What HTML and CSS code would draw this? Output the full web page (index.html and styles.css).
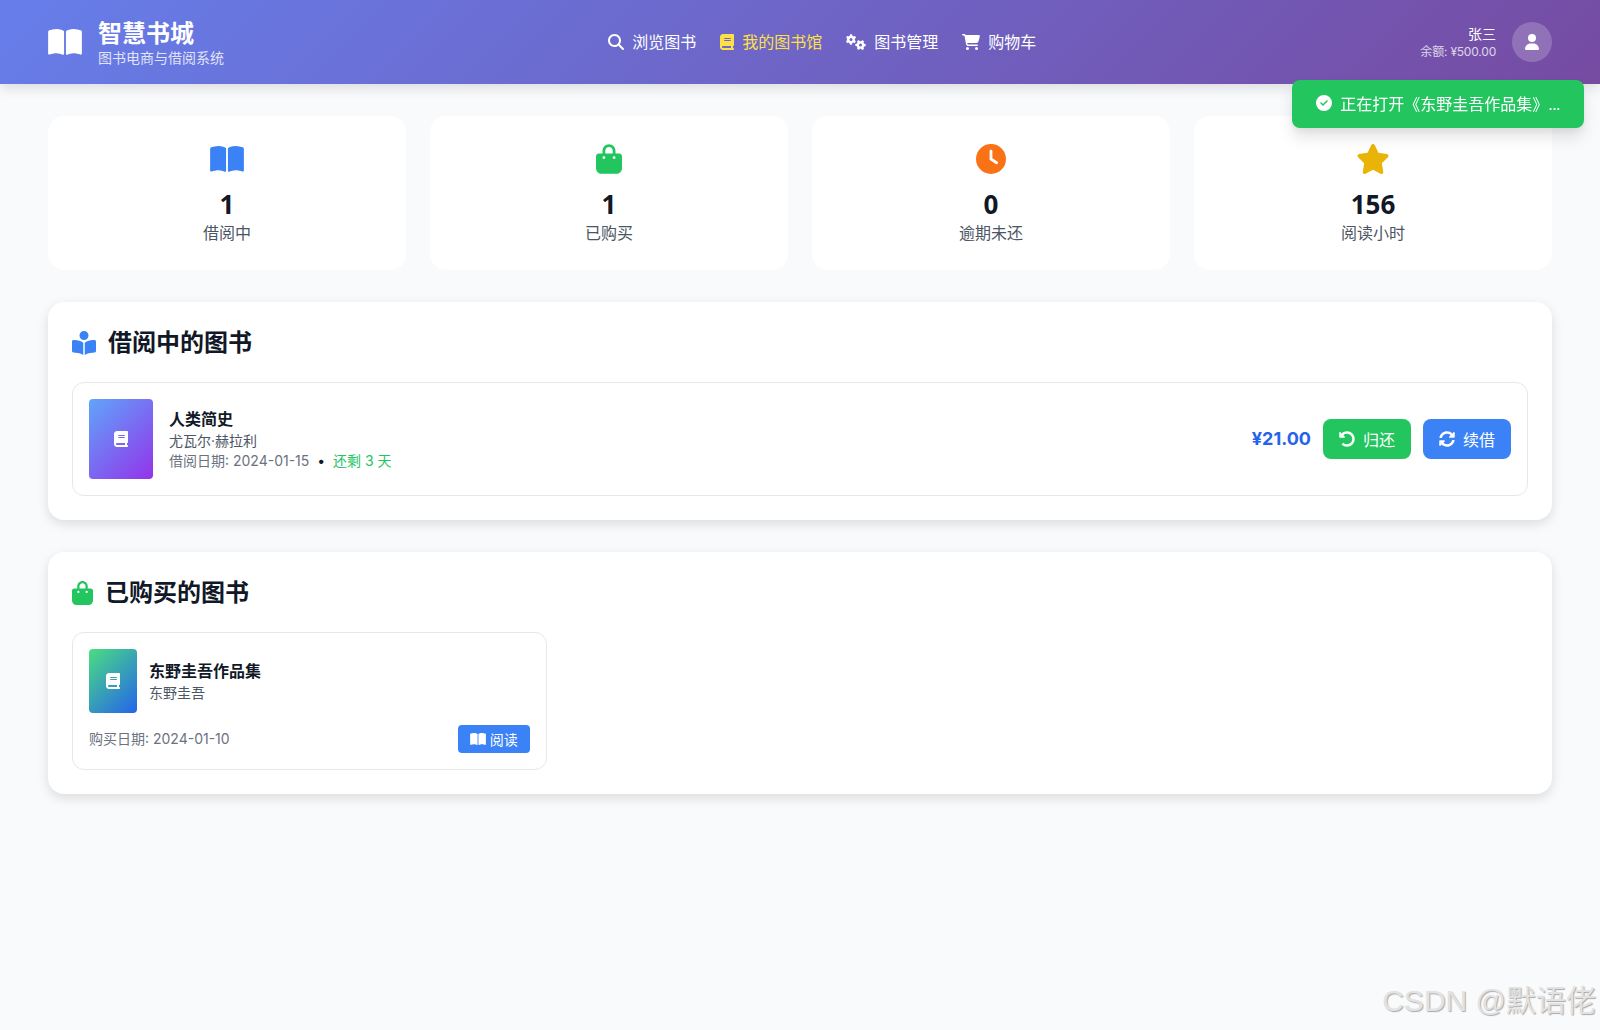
FILE: index.html
```html
<!DOCTYPE html>
<html lang="zh-CN">
<head>
  <meta charset="UTF-8">
  <title>我的图书馆 - 智慧书城</title>
  <link rel="stylesheet" href="styles.css">
</head>
<body>
  <svg class="icon-defs" xmlns="http://www.w3.org/2000/svg">
    <symbol id="i-book-open" viewBox="0 0 576 512"><path d="M249.6 471.5c10.8 3.8 22.4-4.1 22.4-15.5V78.6c0-4.2-1.6-8.4-5-11C247.4 52 202.4 32 144 32C93.5 32 46.3 45.3 18.1 56.1C6.8 60.5 0 71.7 0 83.8V454.1c0 11.9 12.8 20.2 24.1 16.5C55.6 460.1 105.5 448 144 448c33.9 0 79 14 105.6 23.5zm76.8 0C353 462 398.1 448 432 448c38.5 0 88.4 12.1 119.9 22.6c11.3 3.8 24.1-4.6 24.1-16.5V83.8c0-12.1-6.8-23.3-18.1-27.6C529.7 45.3 482.5 32 432 32c-58.4 0-103.4 20-123 35.6c-3.3 2.6-5 6.8-5 11V456c0 11.4 11.7 19.3 22.4 15.5z"/></symbol>
    <symbol id="i-bag" viewBox="0 0 448 512"><path d="M160 112c0-35.3 28.7-64 64-64s64 28.7 64 64v48H160V112zm-48 48H48c-26.5 0-48 21.5-48 48V416c0 53 43 96 96 96H352c53 0 96-43 96-96V208c0-26.5-21.5-48-48-48H336V112C336 50.1 285.9 0 224 0S112 50.1 112 112v48zm24 48a24 24 0 1 1 0 48 24 24 0 1 1 0-48zm152 24a24 24 0 1 1 48 0 24 24 0 1 1 -48 0z"/></symbol>
    <symbol id="i-clock" viewBox="0 0 512 512"><path d="M256 0a256 256 0 1 1 0 512A256 256 0 1 1 256 0zM232 120V256c0 8 4 15.5 10.7 20l96 64c11 7.4 25.9 4.4 33.3-6.7s4.4-25.9-6.7-33.3L280 243.2V120c0-13.3-10.7-24-24-24s-24 10.7-24 24z"/></symbol>
    <symbol id="i-star" viewBox="0 0 576 512"><path d="M316.9 18C311.6 7 300.4 0 288.1 0s-23.4 7-28.8 18L195 150.3 51.4 171.5c-12 1.8-22 10.2-25.7 21.7s-.7 24.2 7.9 32.7L137.8 329 113.2 474.7c-2 12 3 24.2 12.9 31.3s23 8 33.8 2.3l128.3-68.5 128.3 68.5c10.8 5.7 23.9 4.9 33.8-2.3s14.9-19.3 12.9-31.3L438.5 329 542.7 225.9c8.6-8.5 11.7-21.2 7.9-32.7s-13.7-19.9-25.7-21.7L381.2 150.3 316.9 18z"/></symbol>
    <symbol id="i-search" viewBox="0 0 512 512"><path d="M416 208c0 45.9-14.9 88.3-40 122.7L502.6 457.4c12.5 12.5 12.5 32.8 0 45.3s-32.8 12.5-45.3 0L330.7 376c-34.4 25.2-76.8 40-122.7 40C93.1 416 0 322.9 0 208S93.1 0 208 0S416 93.1 416 208zM208 352a144 144 0 1 0 0-288 144 144 0 1 0 0 288z"/></symbol>
    <symbol id="i-book" viewBox="0 0 448 512"><path d="M96 0C43 0 0 43 0 96V416c0 53 43 96 96 96H384h32c17.7 0 32-14.3 32-32s-14.3-32-32-32V384c17.7 0 32-14.3 32-32V32c0-17.7-14.3-32-32-32H384 96zm0 384H352v64H96c-17.7 0-32-14.3-32-32s14.3-32 32-32zm32-240c0-8.8 7.2-16 16-16H336c8.8 0 16 7.2 16 16s-7.2 16-16 16H144c-8.8 0-16-7.2-16-16zm16 48H336c8.8 0 16 7.2 16 16s-7.2 16-16 16H144c-8.8 0-16-7.2-16-16s7.2-16 16-16z"/></symbol>
    <symbol id="i-cogs" viewBox="0 0 640 512"><path d="M308.5 135.3c7.1-6.3 9.9-16.2 6.2-25c-2.3-5.3-4.8-10.5-7.6-15.5L304 89.4c-3-5-6.3-9.9-9.8-14.6c-5.7-7.6-15.7-10.1-24.7-7.1l-28.2 9.3c-10.7-8.8-23-16-36.2-20.9L198 27.1c-1.9-9.3-9.1-16.7-18.5-17.8C173.9 8.4 168.2 8 162.4 8h-.7c-5.8 0-11.5 .4-17.1 1.3c-9.4 1.2-16.7 8.5-18.5 17.8L120.1 56.1c-13.3 5-25.5 12.1-36.2 20.9L55.7 67.8c-9-3-19-.5-24.7 7.1c-3.5 4.7-6.8 9.6-9.9 14.6l-3 5.3c-2.8 5-5.3 10.2-7.6 15.6c-3.7 8.7-.9 18.6 6.2 25l22.2 19.8C32.6 161.9 32 168.9 32 176s.6 14.1 1.7 20.9L11.5 216.7c-7.1 6.3-9.9 16.2-6.2 25c2.3 5.3 4.8 10.5 7.6 15.6l3 5.2c3 5.1 6.3 9.9 9.9 14.6c5.7 7.6 15.7 10.1 24.7 7.1l28.2-9.3c10.7 8.8 23 16 36.2 20.9l6.1 29.1c1.9 9.3 9.1 16.7 18.5 17.8c5.7 .7 11.5 1.1 17.4 1.1s11.7-.4 17.4-1.1c9.4-1.2 16.7-8.5 18.5-17.8l6.1-29.1c13.3-5 25.5-12.1 36.2-20.9l28.2 9.3c9 3 19 .5 24.7-7.1c3.5-4.7 6.8-9.5 9.8-14.6l3.1-5.4c2.8-5 5.3-10.2 7.6-15.5c3.7-8.7 .9-18.6-6.2-25l-22.2-19.8c1.1-6.8 1.7-13.8 1.7-20.9s-.6-14.1-1.7-20.9l22.2-19.8zM112 176a48 48 0 1 1 96 0 48 48 0 1 1 -96 0zM504.7 500.5c6.3 7.1 16.2 9.9 25 6.2c5.3-2.3 10.5-4.8 15.5-7.6l5.4-3.1c5-3 9.9-6.3 14.6-9.8c7.6-5.7 10.1-15.7 7.1-24.7l-9.3-28.2c8.8-10.7 16-23 20.9-36.2l29.1-6.1c9.3-1.9 16.7-9.1 17.8-18.5c.7-5.7 1.1-11.5 1.1-17.4s-.4-11.7-1.1-17.4c-1.2-9.4-8.5-16.7-17.8-18.5l-29.1-6.1c-5-13.3-12.1-25.5-20.9-36.2l9.3-28.2c3-9 .5-19-7.1-24.7c-4.7-3.5-9.6-6.8-14.6-9.9l-5.3-3c-5-2.8-10.2-5.3-15.6-7.6c-8.7-3.7-18.6-.9-25 6.2l-19.8 22.2c-6.8-1.1-13.8-1.7-20.9-1.7s-14.1 .6-20.9 1.7l-19.8-22.2c-6.3-7.1-16.2-9.9-25-6.2c-5.3 2.3-10.5 4.8-15.6 7.6l-5.2 3c-5.1 3-9.9 6.3-14.6 9.9c-7.6 5.7-10.1 15.7-7.1 24.7l9.3 28.2c-8.8 10.7-16 23-20.9 36.2L315.1 313c-9.3 1.9-16.7 9.1-17.8 18.5c-.7 5.7-1.1 11.5-1.1 17.4s.4 11.7 1.1 17.4c1.2 9.4 8.5 16.7 17.8 18.5l29.1 6.1c5 13.3 12.1 25.5 20.9 36.2l-9.3 28.2c-3 9-.5 19 7.1 24.7c4.7 3.5 9.5 6.8 14.6 9.8l5.4 3.1c5 2.8 10.2 5.3 15.5 7.6c8.7 3.7 18.6 .9 25-6.2l19.8-22.2c6.8 1.1 13.8 1.7 20.9 1.7s14.1-.6 20.9-1.7l19.8 22.2zM464 304a48 48 0 1 1 0 96 48 48 0 1 1 0-96z"/></symbol>
    <symbol id="i-cart" viewBox="0 0 576 512"><path d="M0 24C0 10.7 10.7 0 24 0H69.5c22 0 41.5 12.8 50.6 32h411c26.3 0 45.5 25 38.6 50.4l-41 152.3c-8.5 31.4-37 53.3-69.5 53.3H170.7l5.4 28.5c2.2 11.3 12.1 19.5 23.6 19.5H488c13.3 0 24 10.7 24 24s-10.7 24-24 24H199.7c-34.6 0-64.3-24.6-70.7-58.5L77.4 54.5c-.7-3.8-4-6.5-7.9-6.5H24C10.7 48 0 37.3 0 24zM128 464a48 48 0 1 1 96 0 48 48 0 1 1 -96 0zm336-48a48 48 0 1 1 0 96 48 48 0 1 1 0-96z"/></symbol>
    <symbol id="i-user" viewBox="0 0 448 512"><path d="M224 256A128 128 0 1 0 224 0a128 128 0 1 0 0 256zm-45.7 48C79.8 304 0 383.8 0 482.3C0 498.7 13.3 512 29.7 512H418.3c16.4 0 29.7-13.3 29.7-29.7C448 383.8 368.2 304 269.7 304H178.3z"/></symbol>
    <symbol id="i-check" viewBox="0 0 512 512"><path d="M256 512A256 256 0 1 0 256 0a256 256 0 1 0 0 512zM369 209L241 337c-9.4 9.4-24.6 9.4-33.9 0l-64-64c-9.4-9.4-9.4-24.6 0-33.9s24.6-9.4 33.9 0l47 47L335 175c9.4-9.4 24.6-9.4 33.9 0s9.4 24.6 0 33.9z"/></symbol>
    <symbol id="i-undo" viewBox="0 0 512 512"><path d="M255.545 8c-66.269.119-126.438 26.233-170.86 68.685L48.971 40.971C33.851 25.851 8 36.559 8 57.941V192c0 13.255 10.745 24 24 24h134.059c21.382 0 32.09-25.851 16.971-40.971l-41.75-41.75c30.864-28.899 70.801-44.907 113.23-45.273 92.398-.798 170.283 73.977 169.484 169.442C423.236 348.009 349.816 424 256 424c-41.127 0-79.997-14.678-110.63-41.556-4.743-4.161-11.906-3.908-16.368.553L89.34 422.659c-4.872 4.872-4.631 12.815.482 17.433C133.798 479.813 192.074 504 256 504c136.966 0 247.999-111.033 248-247.998C504.001 119.193 392.354 7.755 255.545 8z"/></symbol>
    <symbol id="i-sync" viewBox="0 0 512 512"><path d="M370.72 133.28C339.458 104.008 298.888 87.962 255.848 88c-77.458.068-144.328 53.178-162.791 126.85-1.344 5.363-6.122 9.15-11.651 9.15H24.103c-7.498 0-13.194-6.807-11.807-14.176C33.933 94.924 134.813 8 256 8c66.448 0 126.791 26.136 171.315 68.685L463.03 40.97C478.149 25.851 504 36.559 504 57.941V192c0 13.255-10.745 24-24 24H345.941c-21.382 0-32.09-25.851-16.971-40.971l41.75-41.749zM32 296h134.059c21.382 0 32.09 25.851 16.971 40.971l-41.75 41.75c31.262 29.273 71.835 45.319 114.876 45.28 77.418-.07 144.315-53.144 162.787-126.849 1.344-5.363 6.122-9.15 11.651-9.15h57.304c7.498 0 13.194 6.807 11.807 14.176C478.067 417.076 377.187 504 256 504c-66.448 0-126.791-26.136-171.315-68.685L48.97 471.03C33.851 486.149 8 475.441 8 454.059V320c0-13.255 10.745-24 24-24z"/></symbol>
    <symbol id="i-reader" viewBox="0 0 512 512"><path d="M160 96a96 96 0 1 1 192 0A96 96 0 1 1 160 96zm80 152V512l-48.4-24.2c-20.9-10.4-43.5-17-66.8-19.3l-96-9.6C12.5 457.2 0 443.5 0 427V224c0-17.7 14.3-32 32-32H62.3c63.6 0 125.6 19.6 177.7 56zm32 264V248c52.1-36.4 114.1-56 177.7-56H480c17.7 0 32 14.3 32 32V427c0 16.4-12.5 30.2-28.8 31.8l-96 9.6c-23.2 2.3-45.9 8.9-66.8 19.3L272 512z"/></symbol>
  </svg>

  <header class="topbar">
    <div class="brand">
      <svg class="brand-icon"><use href="#i-book-open"/></svg>
      <div>
        <div class="brand-name">智慧书城</div>
        <div class="brand-sub">图书电商与借阅系统</div>
      </div>
    </div>

    <nav class="nav">
      <a class="nav-link"><svg class="nav-icon ni-search"><use href="#i-search"/></svg>浏览图书</a>
      <a class="nav-link active"><svg class="nav-icon ni-book"><use href="#i-book"/></svg>我的图书馆</a>
      <a class="nav-link"><svg class="nav-icon ni-cogs"><use href="#i-cogs"/></svg>图书管理</a>
      <a class="nav-link"><svg class="nav-icon ni-cart"><use href="#i-cart"/></svg>购物车</a>
    </nav>

    <div class="user">
      <div class="user-info">
        <div class="user-name">张三</div>
        <div class="user-balance">余额: ¥500.00</div>
      </div>
      <div class="avatar"><svg class="avatar-icon"><use href="#i-user"/></svg></div>
    </div>
  </header>

  <main class="content">
    <div class="stats">
      <div class="stat-card">
        <div class="stat-icon"><svg class="si-wide blue"><use href="#i-book-open"/></svg></div>
        <div class="stat-num">1</div>
        <div class="stat-label">借阅中</div>
      </div>
      <div class="stat-card">
        <div class="stat-icon"><svg class="si-bag green"><use href="#i-bag"/></svg></div>
        <div class="stat-num">1</div>
        <div class="stat-label">已购买</div>
      </div>
      <div class="stat-card">
        <div class="stat-icon"><svg class="si-clock orange"><use href="#i-clock"/></svg></div>
        <div class="stat-num">0</div>
        <div class="stat-label">逾期未还</div>
      </div>
      <div class="stat-card">
        <div class="stat-icon"><svg class="si-wide yellow"><use href="#i-star"/></svg></div>
        <div class="stat-num">156</div>
        <div class="stat-label">阅读小时</div>
      </div>
    </div>

    <section class="panel">
      <h2 class="panel-title"><svg class="pi-reader blue"><use href="#i-reader"/></svg>借阅中的图书</h2>
      <div class="borrow-item">
        <div class="cover cover-large"><svg class="cover-icon"><use href="#i-book"/></svg></div>
        <div class="borrow-info">
          <div class="book-title">人类简史</div>
          <div class="book-author">尤瓦尔·赫拉利</div>
          <div class="book-date date-row">借阅日期: 2024-01-15 <span class="dot">•</span> <span class="remain">还剩 3 天</span></div>
        </div>
        <div class="borrow-actions">
          <span class="price">¥21.00</span>
          <button class="btn btn-green"><svg class="btn-icon"><use href="#i-undo"/></svg>归还</button>
          <button class="btn btn-blue"><svg class="btn-icon"><use href="#i-sync"/></svg>续借</button>
        </div>
      </div>
    </section>

    <section class="panel">
      <h2 class="panel-title"><svg class="pi-bag green"><use href="#i-bag"/></svg>已购买的图书</h2>
      <div class="bought-grid">
        <div class="bought-card">
          <div class="bought-top">
            <div class="cover cover-small"><svg class="cover-icon"><use href="#i-book"/></svg></div>
            <div class="bought-info">
              <div class="book-title">东野圭吾作品集</div>
              <div class="book-author">东野圭吾</div>
            </div>
          </div>
          <div class="bought-bottom">
            <span class="book-date">购买日期: 2024-01-10</span>
            <button class="btn-small"><svg class="btn-small-icon"><use href="#i-book-open"/></svg>阅读</button>
          </div>
        </div>
      </div>
    </section>
  </main>

  <div class="toast"><svg class="toast-icon"><use href="#i-check"/></svg><span>正在打开《东野圭吾作品集》<span class="toast-dots">...</span></span></div>
  <div class="watermark">CSDN @默语佬</div>
</body>
</html>
```

FILE: styles.css
```css
* {
  box-sizing: border-box;
}

body {
  margin: 0;
  min-height: 100vh;
  background: #f9fafb;
  color: #111827;
  font-family: Inter, "Noto Sans CJK SC", sans-serif;
  position: relative;
}

svg {
  fill: currentColor;
  display: block;
  flex: none;
}

.icon-defs {
  display: none;
}

.blue { color: #3b82f6; }
.green { color: #22c55e; }
.orange { color: #f97316; }
.yellow { color: #eab308; }

/* top bar */
.topbar {
  height: 84px;
  padding: 0 48px;
  display: flex;
  align-items: center;
  justify-content: space-between;
  color: #fff;
  background: linear-gradient(135deg, #667eea 0%, #764ba2 100%);
  box-shadow: 0 4px 12px rgba(0,0,0,0.12);
}

.brand {
  display: flex;
  align-items: center;
  gap: 16px;
}

.brand-icon {
  width: 34px;
  height: 30px;
}

.brand-name {
  font-size: 24px;
  font-weight: 700;
  line-height: 32px;
}

.brand-sub {
  font-size: 14px;
  line-height: 16px;
  opacity: 0.8;
}

.nav {
  display: flex;
  gap: 24px;
}

.nav-link {
  display: flex;
  align-items: center;
  gap: 8px;
  font-size: 16px;
  line-height: 24px;
}

.nav-link.active {
  color: #fde047;
}

.ni-search { width: 16px; height: 16px; }
.ni-book { width: 14px; height: 16px; }
.ni-cogs { width: 20px; height: 16px; }
.ni-cart { width: 18px; height: 16px; }

.user {
  display: flex;
  align-items: center;
  gap: 16px;
}

.user-info {
  text-align: right;
}

.user-name {
  font-size: 14px;
  line-height: 20px;
}

.user-balance {
  font-size: 12px;
  line-height: 16px;
  letter-spacing: -0.2px;
  opacity: 0.75;
}

.avatar {
  width: 40px;
  height: 40px;
  border-radius: 50%;
  background: rgba(255,255,255,0.2);
  display: flex;
  align-items: center;
  justify-content: center;
}

.avatar-icon {
  width: 14px;
  height: 16px;
}

/* page content */
.content {
  padding: 32px 48px;
}

.stats {
  display: grid;
  grid-template-columns: repeat(4, 1fr);
  gap: 24px;
  margin-bottom: 32px;
}

.stat-card {
  height: 154px;
  padding: 24px;
  background: #fff;
  border-radius: 16px;
  text-align: center;
}

.stat-icon {
  height: 38px;
  display: flex;
  align-items: center;
  justify-content: center;
  margin-bottom: 10px;
}

.si-wide { width: 34px; height: 30px; }
.si-bag { width: 26px; height: 30px; }
.si-clock { width: 30px; height: 30px; }

.stat-num {
  font-family: "Open Sans", "Noto Sans CJK SC", sans-serif;
  font-size: 26px;
  font-weight: 700;
  line-height: 32px;
  padding-bottom: 1px;
}

.stat-label {
  font-size: 16px;
  line-height: 24px;
  color: #4b5563;
}

.panel {
  background: #fff;
  border-radius: 16px;
  padding: 24px;
  margin-bottom: 32px;
  box-shadow: 0 4px 12px rgba(0,0,0,0.12);
}

.panel-title {
  display: flex;
  align-items: center;
  gap: 12px;
  margin: 0 0 23px;
  padding-top: 1px;
  font-size: 24px;
  font-weight: 700;
  line-height: 32px;
}

.pi-reader { width: 24px; height: 24px; }
.pi-bag { width: 21px; height: 24px; }

.borrow-item {
  display: flex;
  align-items: center;
  gap: 16px;
  padding: 16px;
  border: 1px solid #e5e7eb;
  border-radius: 12px;
}

.cover {
  display: flex;
  align-items: center;
  justify-content: center;
  border-radius: 4px;
  color: #fff;
  flex: none;
}

.cover-large {
  width: 64px;
  height: 80px;
  background: linear-gradient(135deg, #60a5fa, #9333ea);
}

.cover-small {
  width: 48px;
  height: 64px;
  background: linear-gradient(135deg, #4ade80, #2563eb);
}

.cover-icon {
  width: 14px;
  height: 16px;
}

.borrow-info {
  flex: 1;
  padding-top: 1px;
}

.bought-info {
  padding-bottom: 1px;
}

.book-title {
  font-size: 16px;
  font-weight: 700;
  line-height: 22px;
}

.book-author {
  font-size: 14px;
  line-height: 19px;
  margin-top: 1px;
  color: #4b5563;
}

.book-date {
  font-size: 14px;
  line-height: 20px;
  color: #6b7280;
}

.date-row {
  margin-top: 1px;
}

.dot {
  color: #111827;
  margin: 0 4px;
}

.remain {
  color: #22c55e;
}

.borrow-actions {
  display: flex;
  align-items: center;
  gap: 12px;
}

.price {
  font-size: 18px;
  font-weight: 700;
  color: #2563eb;
  padding-bottom: 2px;
}

.btn {
  display: flex;
  align-items: center;
  gap: 8px;
  height: 40px;
  padding: 0 16px;
  border: none;
  border-radius: 8px;
  color: #fff;
  font: inherit;
  font-size: 16px;
}

.btn-green { background: #22c55e; }
.btn-blue { background: #3b82f6; }

.btn-icon {
  width: 16px;
  height: 16px;
}

.bought-grid {
  display: grid;
  grid-template-columns: repeat(3, 1fr);
  gap: 16px;
}

.bought-card {
  padding: 16px;
  border: 1px solid #e5e7eb;
  border-radius: 12px;
}

.bought-top {
  display: flex;
  align-items: center;
  gap: 12px;
  margin-bottom: 12px;
}

.bought-bottom {
  display: flex;
  align-items: center;
  justify-content: space-between;
}

.btn-small {
  display: flex;
  align-items: center;
  gap: 4px;
  height: 28px;
  padding: 0 12px;
  border: none;
  border-radius: 4px;
  background: #3b82f6;
  color: #fff;
  font: inherit;
  font-size: 14px;
}

.btn-small-icon {
  width: 16px;
  height: 14px;
}

/* toast over the top right corner */
.toast {
  position: fixed;
  top: 80px;
  right: 16px;
  display: flex;
  align-items: center;
  gap: 8px;
  height: 48px;
  padding: 0 24px 2px;
  border-radius: 8px;
  background: #22c55e;
  color: #fff;
  font-size: 16px;
  box-shadow: 0 10px 15px rgba(0,0,0,0.1), 0 4px 6px rgba(0,0,0,0.05);
}

.toast-icon {
  width: 16px;
  height: 16px;
}

.toast-dots {
  letter-spacing: -0.7px;
}

.watermark {
  position: absolute;
  right: 4px;
  bottom: 11px;
  font-family: "Liberation Sans", "Noto Sans CJK SC", sans-serif;
  font-size: 30px;
  line-height: 36px;
  color: #e2e2e2;
  text-shadow: 1px 1px 1px #aaa;
}
```
